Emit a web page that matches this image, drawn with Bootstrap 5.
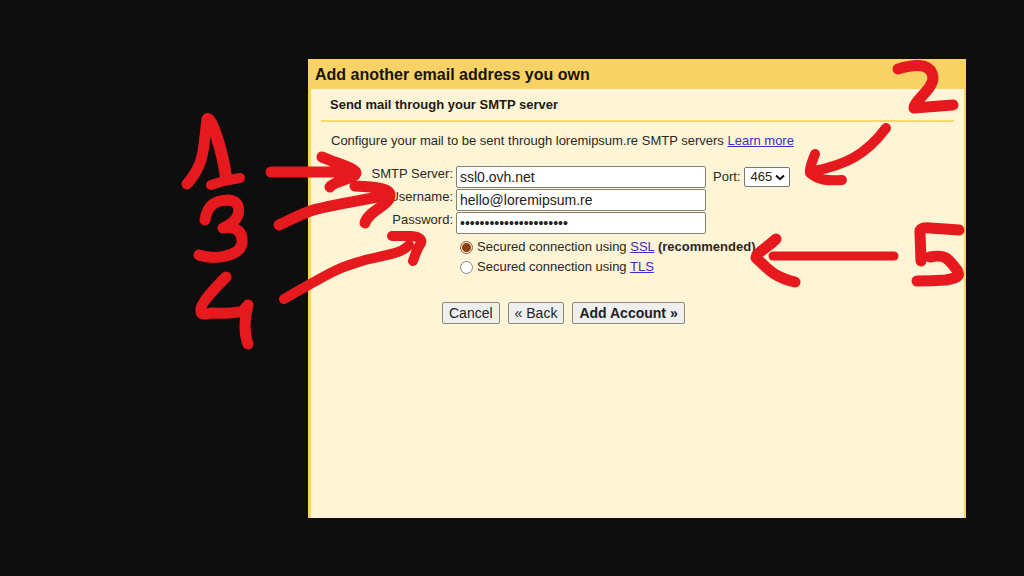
<!DOCTYPE html>
<html lang="en">
<head>
<meta charset="utf-8">
<meta name="viewport" content="width=device-width, initial-scale=1">
<title>Add another email address you own</title>
<link href="https://cdn.jsdelivr.net/npm/bootstrap@5.3.0/dist/css/bootstrap.min.css" rel="stylesheet">
<style>
  body {
    background: #0e0e0e;
    color: #2b281f;
    font-family: "Liberation Sans", Arial, sans-serif;
    font-size: 13px;
    line-height: 16px;
    padding: 59px 58px 58px 308px;
  }
  a { color: #3a2fc8; }
  .panel {
    background: #fef4d6;
    border: solid #f8d264;
    border-width: 0 2px 0 3px;
  }
  .panel-title {
    background: #f8d264;
    color: #17130a;
    font-size: 16px;
    line-height: 20px;
    padding: 6px 4px 4px;
  }
  .panel-main { padding: 8px 10px 0; }
  .step-title {
    font-size: 13px;
    line-height: 16px;
    color: #1d1a12;
    padding: 0 9px 7px;
    border-bottom: 2px solid #f6d86c;
  }
  .intro { padding: 11px 10px 0; }
  .fields {
    grid-template-columns: 132px 250px 1fr;
    column-gap: 3px;
    row-gap: 1px;
    padding-top: 17px;
  }
  .fields > label { line-height: 16px; }
  .field-box {
    height: 22px;
    border: 1px solid #85826f;
    border-radius: 2px;
    background: #fff;
    color: #222;
    font-size: 14px;
    padding: 0 3px;
  }
  .port-box {
    height: 20px;
    width: 46px;
    padding: 0 5px;
    appearance: none;
    border: 1px solid #777;
    border-radius: 2px;
    color: #222;
    background: #fff url("data:image/svg+xml,%3Csvg xmlns='http://www.w3.org/2000/svg' viewBox='0 0 10 7'%3E%3Cpath d='M1 1.5 5 5.2 9 1.5' fill='none' stroke='%23111' stroke-width='2'/%3E%3C/svg%3E") no-repeat right 4px center / 10px 7px;
  }
  .security { padding: 3px 0 0 139px; }
  .security > div { height: 20px; }
  .dot {
    appearance: none;
    width: 13px;
    height: 13px;
    border: 1px solid #8a8a86;
    border-radius: 50%;
    background: #fff;
  }
  .dot:checked {
    border-color: #995a3a;
    background: radial-gradient(circle, #8a4210 0 4px, #f8e4d8 5px);
  }
  .actions { padding: 25px 0 0 121px; }
  .action {
    height: 22px;
    padding: 0 6px;
    border: 1px solid #8f8c7c;
    border-radius: 2px;
    background: #efefef;
    color: #222;
    font-size: 14px;
    line-height: 18px;
  }
  .notes {
    top: 0;
    left: -3px;
    width: 658px;
    height: 459px;
    overflow: visible;
    pointer-events: none;
  }
</style>
</head>
<body class="min-vh-100 d-flex">
<main class="panel position-relative flex-grow-1">
  <h1 class="panel-title fw-bold m-0">Add another email address you own</h1>
  <form class="panel-main">
    <h2 class="step-title fw-bold m-0">Send mail through your SMTP server</h2>
    <p class="intro m-0">Configure your mail to be sent through loremipsum.re SMTP servers <a href="#">Learn more</a></p>
    <div class="fields d-grid">
      <label class="text-end" for="server">SMTP Server:</label>
      <div class="d-flex"><input class="field-box w-100" id="server" type="text" value="ssl0.ovh.net"></div>
      <div class="d-flex align-items-center gap-1 ps-1"><label for="port">Port:</label>
        <select class="port-box" id="port"><option>465</option><option>587</option><option>25</option></select></div>
      <label class="text-end" for="user">Username:</label>
      <div class="d-flex"><input class="field-box w-100" id="user" type="text" value="hello@loremipsum.re"></div>
      <span></span>
      <label class="text-end" for="pass">Password:</label>
      <div class="d-flex"><input class="field-box w-100" id="pass" type="password" value="loremipsumdolorsitamet"></div>
      <span></span>
    </div>
    <div class="security">
      <div class="d-flex align-items-center"><input class="dot me-1" type="radio" name="sec" id="ssl" checked><label for="ssl">Secured connection using <a href="#">SSL</a> <b>(recommended)</b></label></div>
      <div class="d-flex align-items-center"><input class="dot me-1" type="radio" name="sec" id="tls"><label for="tls">Secured connection using <a href="#">TLS</a></label></div>
    </div>
    <div class="actions d-flex">
      <button class="action me-2" type="button">Cancel</button>
      <button class="action me-2" type="button">« Back</button>
      <button class="action fw-bold" type="submit">Add Account »</button>
    </div>
  </form>
  <!-- hand-drawn step numbers and arrows -->
  <svg class="notes position-absolute" viewBox="308 59 658 459" fill="none" stroke="#e6191e" stroke-width="11" stroke-linecap="round" stroke-linejoin="round" aria-hidden="true">
    <path d="M187 184C199 170 202 160 204 145L207 119"/>
    <path stroke-width="12" d="M208 119Q212 121 217 138Q223 156 226 177"/>
    <path stroke-width="10" d="M211 185Q225 180 240 178"/>
    <path d="M205 220C207 205 216 200 229 200C238 201 240 208 238 215Q235 223 223 228C238 225 243 234 242 243C240 257 213 260 199 255"/>
    <path d="M226 277C215 288 201 303 201 309C200 316 206 314 212 313Q232 314 243 311L248 305C245 317 243 331 248 344"/>
    <path d="M271 172L349 172M322 157C335 163 356 168 356 173C356 178 334 181 330 187"/>
    <path d="M279 225C315 208 302 211 383 196M355 186C375 187 391 188 390 196C389 206 368 211 365 223"/>
    <path stroke-width="10" d="M284 299C345 264 340 268 365 260C390 254 402 253 409 245M392 236L411 236Q423 237 421 243C416 250 415 256 413 261"/>
    <path d="M898 69C922 62 932 66 933 78C933 89 914 101 914 108L953 105"/>
    <path stroke-width="10" d="M886 128C866 155 845 165 814 171M815 154C812 162 809 168 810 173C818 180 827 181 842 180"/>
    <path d="M959 230L930 228Q919 227 920 233L921 261M930 257C945 254 948 258 957 270C961 277 956 278 946 280Q932 281 917 281"/>
    <path stroke-width="9" d="M773 256L894 256"/>
    <path d="M776 239C768 247 756 253 756 258C765 265 770 276 795 282"/>
  </svg>
</main>
<script src="https://cdn.jsdelivr.net/npm/bootstrap@5.3.0/dist/js/bootstrap.bundle.min.js"></script>
</body>
</html>
